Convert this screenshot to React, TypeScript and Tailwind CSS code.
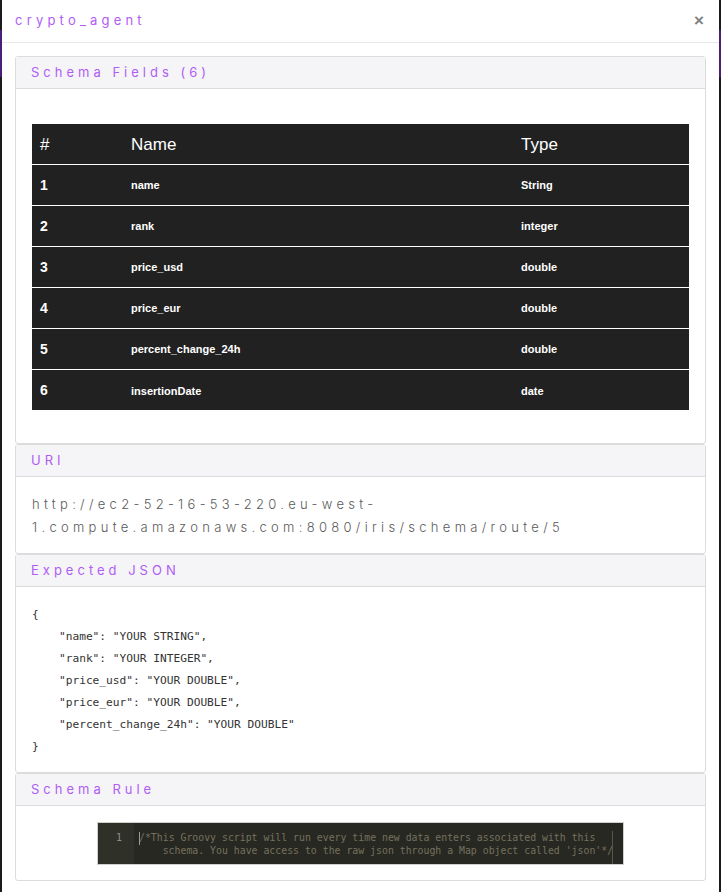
import React from "react";

const fields = [
  { id: 1, name: "name", type: "String" },
  { id: 2, name: "rank", type: "integer" },
  { id: 3, name: "price_usd", type: "double" },
  { id: 4, name: "price_eur", type: "double" },
  { id: 5, name: "percent_change_24h", type: "double" },
  { id: 6, name: "insertionDate", type: "date" },
];

const jsonLines = [
  "{",
  '    "name": "YOUR STRING",',
  '    "rank": "YOUR INTEGER",',
  '    "price_usd": "YOUR DOUBLE",',
  '    "price_eur": "YOUR DOUBLE",',
  '    "percent_change_24h": "YOUR DOUBLE"',
  "}",
];

export default function App() {
  return (
    <div className="flex h-[892px] overflow-hidden bg-[#1b1b1d]">
      {/* page behind the modal */}
      <div className="flex w-[2px] flex-col">
        <div className="h-[30px]" />
        <div className="h-[47px] bg-[#4a1d78]" />
      </div>

      <div className="flex-1 bg-white">
        {/* Modal header */}
        <div className="flex h-[43px] items-center justify-between border-b border-[#e8e8e8] pl-[13px] pr-[15px]">
          <span className="font-['Inter',sans-serif] text-[13px] tracking-[4.2px] text-[#b05cf6]">
            crypto_agent
          </span>
          <button
            type="button"
            className="pb-[2px] font-['Liberation_Sans',sans-serif] text-[17px] font-bold leading-none text-[#808080]"
          >
            ×
          </button>
        </div>

        <div className="mx-[13px] mt-[13px]">
          <Panel title="Schema Fields (6)">
            <div className="px-[16px] pb-[33px] pt-[35px]">
              <table className="w-full border-collapse bg-[#212121] font-['Liberation_Sans',Arial,sans-serif] text-white">
                <thead>
                  <tr className="h-[40px] text-left">
                    <th className="w-[91px] pl-[8px] pt-[2px] text-[17px] font-normal">#</th>
                    <th className="w-[390px] pl-[8px] pt-[2px] text-[17px] font-normal">Name</th>
                    <th className="pl-[8px] pt-[2px] text-[17px] font-normal">Type</th>
                  </tr>
                </thead>
                <tbody>
                  {fields.map((f) => (
                    <tr key={f.id} className="h-[41px] border-t border-white">
                      <td className="pl-[8px] pt-[1px] text-[14px] font-bold">{f.id}</td>
                      <td className="pl-[8px] pt-[2px] text-[11px] font-bold">{f.name}</td>
                      <td className="pl-[8px] pt-[2px] text-[11px] font-bold">{f.type}</td>
                    </tr>
                  ))}
                </tbody>
              </table>
            </div>
          </Panel>

          <Panel title="URI">
            <p className="px-[16px] pb-[15px] pt-[16px] font-['Inter',sans-serif] text-[13px] font-light leading-[22.5px] tracking-[4.3px] text-[#5a5a5a]">
              http://ec2-52-16-53-220.eu-west-
              <br />
              1.compute.amazonaws.com:8080/iris/schema/route/5
            </p>
          </Panel>

          <Panel title="Expected JSON">
            <pre className="px-[16px] pb-[14px] pt-[17px] font-['DejaVu_Sans_Mono',monospace] text-[11.2px] leading-[22px] text-[#333]">
              {jsonLines.join("\n")}
            </pre>
          </Panel>

          <Panel title="Schema Rule">
            <div className="flex justify-center pb-[15px] pt-[16px]">
              <CodeEditor />
            </div>
          </Panel>
        </div>
      </div>

      <div className="flex w-[2px] flex-col">
        <div className="h-[30px]" />
        <div className="h-[47px] bg-[#4a1d78]" />
      </div>
    </div>
  );
}

function Panel({ title, children }: { title: string; children: React.ReactNode }) {
  return (
    <section className="rounded-[3px] border border-[#dcdcdc] bg-white">
      <div className="flex h-[32px] items-center border-b border-[#dcdcdc] bg-[#f5f5f7] pl-[15px]">
        <h3 className="font-['Inter',sans-serif] text-[13px] tracking-[4px] text-[#b05cf6]">
          {title}
        </h3>
      </div>
      {children}
    </section>
  );
}

function CodeEditor() {
  return (
    <div className="flex h-[43px] w-[527px] border border-[#cfcfcf] bg-[#272822] font-['DejaVu_Sans_Mono',monospace] text-[9.85px] leading-[12.5px]">
      <div className="w-[36px] bg-[#2f3129] pr-[12px] pt-[9px] text-right text-[#8f908a]">1</div>
      <div className="relative flex-1 pl-[5px] pt-[9px] text-[#75715e]">
        <span className="absolute left-[5px] top-[9px] h-[12.5px] w-[1px] bg-[#9a9a92]" />
        <div className="whitespace-pre">
          /*This Groovy script will run every time new data enters associated with this
        </div>
        <div className="whitespace-pre pl-[23.7px]">
          schema. You have access to the raw json through a Map object called 'json'*/
        </div>
        <span className="absolute bottom-0 left-[478px] top-[8px] w-[1px] bg-[#55564e]" />
      </div>
    </div>
  );
}
